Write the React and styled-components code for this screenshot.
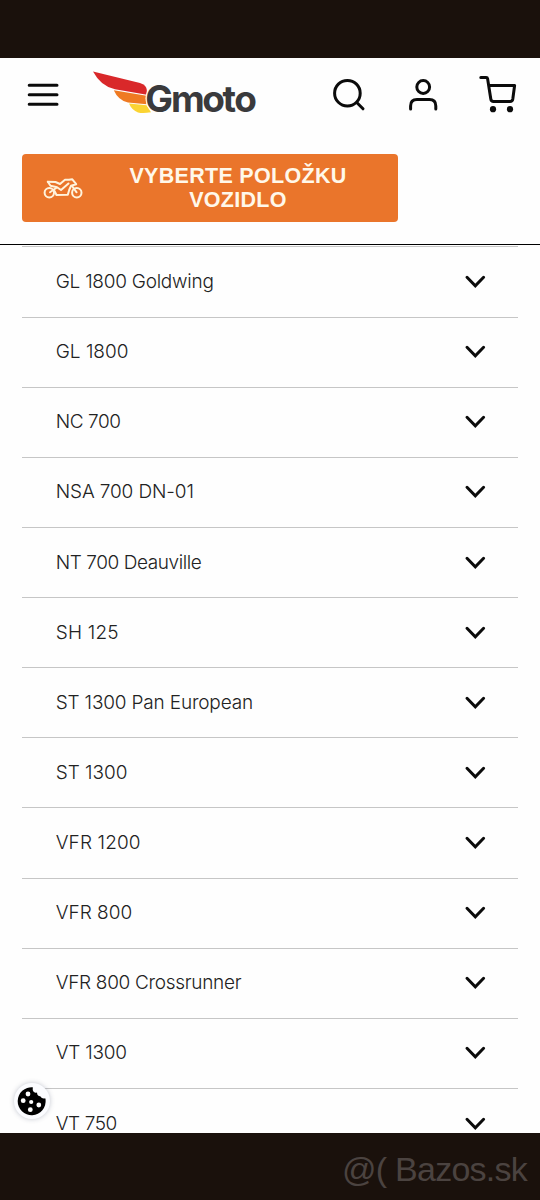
import React from "react";
import styled, { createGlobalStyle } from "styled-components";

const GlobalStyle = createGlobalStyle`
  * {
    box-sizing: border-box;
  }
  body {
    margin: 0;
    background: #fff;
    font-family: Inter, "Liberation Sans", sans-serif;
  }
`;
const Screen = styled.div`
  position: relative;
  width: 540px;
  height: 1200px;
  display: flex;
  flex-direction: column;
  overflow: hidden;
  background: #fefefe;
`;
const SystemBar = styled.div`
  flex: none;
  height: ${({ $height }) => $height}px;
  background: #1a110c;
`;
const Header = styled.header`
  flex: none;
  height: 187px;
  border-bottom: 1px solid #000;
`;
const Toolbar = styled.div`
  height: 96px;
  display: flex;
  align-items: flex-start;
  padding: 12px 20px 0 24px;
`;
const IconButton = styled.button`
  width: 40px;
  height: 48px;
  padding: 0;
  border: 0;
  background: none;
  margin-left: ${({ $left }) => $left || 0}px;

  svg {
    display: block;
  }
`;
const Logo = styled.svg`
  display: block;
  margin-left: 26px;
  overflow: visible;
`;
const LogoText = styled.text`
  font-family: Inter, "Liberation Sans", sans-serif;
  font-weight: 700;
  font-size: 37px;
  fill: #3a3a3c;
`;
const VehicleButton = styled.button`
  width: 376px;
  height: 68px;
  margin-left: 22px;
  padding: 0 0 0 20px;
  display: flex;
  align-items: center;
  border: 0;
  border-radius: 4px;
  background: #ea752b;
  color: #fff8ea;
`;
const VehicleLabel = styled.span`
  width: 276px;
  margin-left: 16px;
  padding-bottom: 1px;
  text-align: center;
  font-family: "Liberation Sans", Arial, sans-serif;
  font-size: 21.5px;
  font-weight: 700;
  line-height: 24px;
  letter-spacing: 0.3px;
`;
const ModelList = styled.ul`
  flex: none;
  height: 888px;
  margin: 0;
  padding: 1.45px 22px 0;
  overflow: hidden;
  list-style: none;
`;
const ModelRow = styled.li`
  height: 70.125px;
  padding: 0 31px 0 33.7px;
  display: flex;
  align-items: center;
  justify-content: space-between;
  border-top: 1px solid #c6c6c6;
`;
const ModelName = styled.span`
  font-size: 19px;
  font-weight: 300;
  line-height: 24px;
  color: #222;
  white-space: nowrap;
  letter-spacing: ${({ $spacing }) => $spacing || 0}px;
`;
const CookieButton = styled.button`
  position: absolute;
  left: 14px;
  top: 1083px;
  width: 36px;
  height: 36px;
  padding: 0;
  border: 0;
  border-radius: 50%;
  background: #fbfcff;
  box-shadow: 0 0 5px rgba(60, 70, 100, 0.3);

  svg {
    display: block;
  }
`;
const Watermark = styled.div`
  position: absolute;
  right: 13px;
  bottom: 12px;
  font-family: "Liberation Sans", sans-serif;
  font-size: 34px;
  line-height: 38px;
  letter-spacing: -0.75px;
  color: #4b4340;
  white-space: nowrap;
`;

const models = [
  { name: "GL 1800 Goldwing", spacing: -0.25 },
  { name: "GL 1800" },
  { name: "NC 700", spacing: -0.4 },
  { name: "NSA 700 DN-01", spacing: -0.12 },
  { name: "NT 700 Deauville", spacing: -0.42 },
  { name: "SH 125", spacing: 0.2 },
  { name: "ST 1300 Pan European", spacing: -0.17 },
  { name: "ST 1300" },
  { name: "VFR 1200", spacing: 0.12 },
  { name: "VFR 800" },
  { name: "VFR 800 Crossrunner", spacing: -0.3 },
  { name: "VT 1300", spacing: -0.22 },
  { name: "VT 750", spacing: -0.4 },
];

const stroke = {
  fill: "none",
  stroke: "#0b0b0b",
  strokeWidth: 3,
  strokeLinecap: "round",
  strokeLinejoin: "round",
};

const MenuIcon = () => (
  <svg width="40" height="48" viewBox="24 70 40 48" {...stroke}>
    <path d="M29.2 85.3H57M29.2 94.8H57M29.2 104.3H57" />
  </svg>
);

const SearchIcon = () => (
  <svg width="40" height="48" viewBox="328 70 40 48" {...stroke}>
    <circle cx="347.4" cy="93.2" r="12.8" />
    <path d="M357 102.8L363 108.8" />
  </svg>
);

const UserIcon = () => (
  <svg width="40" height="48" viewBox="403 70 40 48" {...stroke}>
    <circle cx="423.2" cy="87" r="6.4" />
    <path d="M410.6 109V106Q410.6 99.6 417 99.6H429.4Q435.8 99.6 435.8 106V109" />
  </svg>
);

const CartIcon = () => (
  <svg width="40" height="48" viewBox="478 70 40 48" {...stroke}>
    <path d="M480.8 77.5H486.2Q487.4 77.5 487.6 78.7L490.8 99Q491.2 101.5 493.6 101.5H510Q512.4 101.5 512.8 99L514.6 85.5H489" />
    <circle cx="493" cy="109.2" r="3.1" fill="#0b0b0b" stroke="none" />
    <circle cx="510" cy="109.2" r="3.1" fill="#0b0b0b" stroke="none" />
  </svg>
);

const GmotoLogo = () => (
  <Logo width="178" height="60" viewBox="90 70 178 60">
    <path d="M93 71.5L140 83Q146.5 85 146.8 90V94.7L115 89.2Q101 86.5 93 71.5Z" fill="#d9282a" />
    <path d="M113.8 90.2L146.5 95.7V104.3L128 102.6Q118 100 113.8 90.2Z" fill="#ef7a22" />
    <path d="M129 103.6L146.5 105.2L151 112.3Q143 113.6 138 112.5Q132 110.5 129 103.6Z" fill="#fbd433" />
    <ellipse cx="160" cy="98.3" rx="14.5" ry="15.8" fill="#fefefe" />
    <LogoText x="145.3 171 202.3 222.6 234.2" y="112">
      Gmoto
    </LogoText>
  </Logo>
);

const MotorcycleIcon = () => (
  <svg width="42" height="28" viewBox="42 174 42 28" fill="none" stroke="#fff3dc" strokeWidth="2" strokeLinecap="round" strokeLinejoin="round">
    <circle cx="49.3" cy="192.7" r="4.7" />
    <circle cx="76.8" cy="192.7" r="4.7" />
    <path d="M47.8 181.8L55.5 182L60 184L65 179.8H69L72.3 179.3L76.2 184.2L71 185.8L69.2 190L67.8 194.8L56.5 195L54.5 191" />
    <path d="M47.8 181.8L50.5 185.8L57 187.2L61 190L68.5 183.5M50 192.3L56.5 187.8M72 186L76.6 192.3" />
  </svg>
);

const ChevronIcon = () => (
  <svg width="24" height="16" viewBox="0 0 24 16" {...stroke} strokeLinejoin="miter">
    <path d="M4 3.3L12.3 11.8L20.6 3.3" />
  </svg>
);

const CookieIcon = () => (
  <svg width="36" height="36" viewBox="14 1083 36 36">
    <path d="M32.8 1087.2A14 14 0 1 0 45.6 1099.6L45.2 1098.2Q42.4 1099.4 40.2 1096.2Q37.2 1096.2 37 1092.4Q34.6 1093.4 33.4 1091.6Q32.4 1090 32.8 1087.2Z" fill="#000" />
    <g fill="#fff">
      <circle cx="28" cy="1094" r="2.4" />
      <circle cx="23.2" cy="1100.7" r="2.4" />
      <circle cx="31.2" cy="1102" r="2.1" />
      <circle cx="38.8" cy="1105" r="2.4" />
      <circle cx="30.3" cy="1109.7" r="2.4" />
    </g>
  </svg>
);

const App = () => {
  return (
    <Screen>
      <GlobalStyle />
      <SystemBar $height={58} />
      <Header>
        <Toolbar>
          <IconButton aria-label="Menu">
            <MenuIcon />
          </IconButton>
          <GmotoLogo />
          <IconButton aria-label="Hľadať" $left={60}>
            <SearchIcon />
          </IconButton>
          <IconButton aria-label="Účet" $left={35}>
            <UserIcon />
          </IconButton>
          <IconButton aria-label="Košík" $left={35}>
            <CartIcon />
          </IconButton>
        </Toolbar>
        <VehicleButton>
          <MotorcycleIcon />
          <VehicleLabel>
            VYBERTE POLOŽKU
            <br />
            VOZIDLO
          </VehicleLabel>
        </VehicleButton>
      </Header>
      <ModelList>
        {models.map(({ name, spacing }) => (
          <ModelRow key={name}>
            <ModelName $spacing={spacing}>{name}</ModelName>
            <ChevronIcon />
          </ModelRow>
        ))}
      </ModelList>
      <SystemBar $height={67} />
      <CookieButton aria-label="Cookies">
        <CookieIcon />
      </CookieButton>
      <Watermark>@( Bazos.sk</Watermark>
    </Screen>
  );
};

export default App;
